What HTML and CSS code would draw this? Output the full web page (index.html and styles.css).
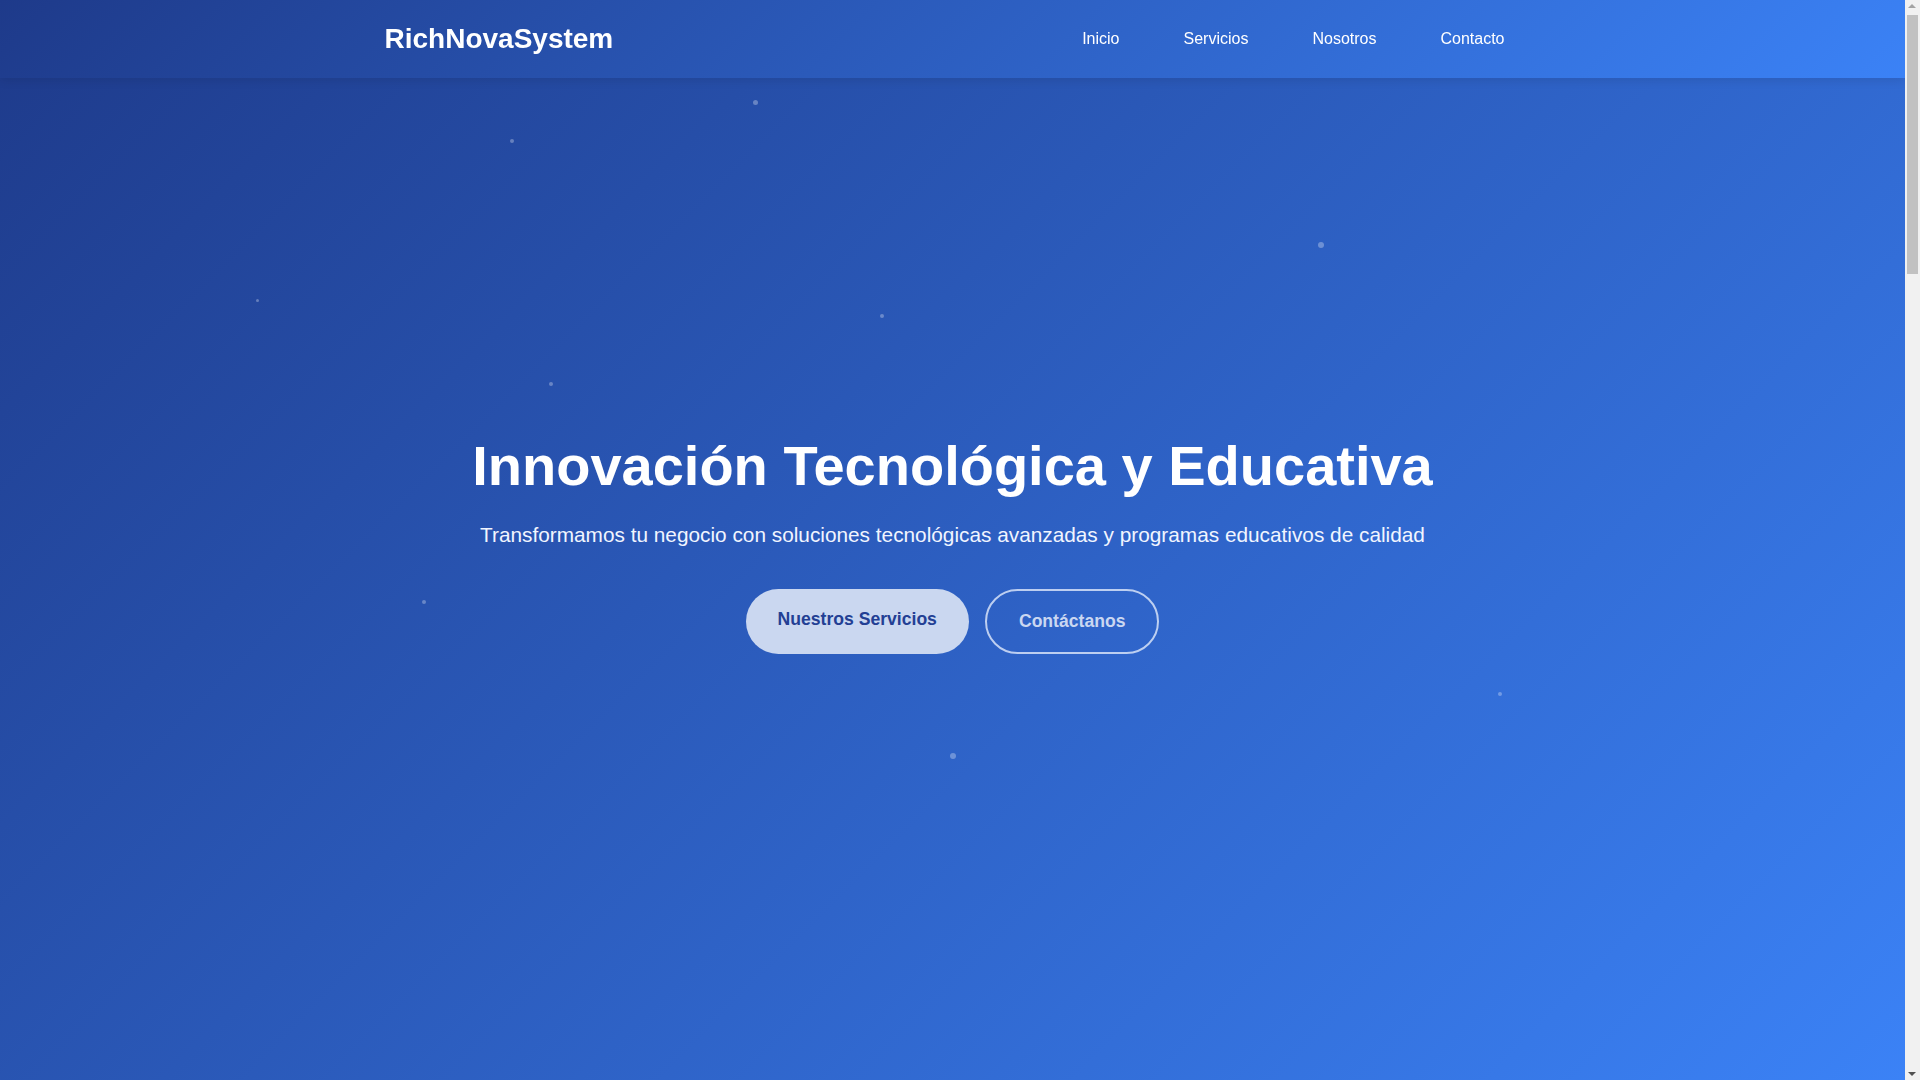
FILE: index.html
```html
<!DOCTYPE html>
<html lang="es">
<head>
<meta charset="UTF-8">
<title>RichNovaSystem</title>
<link rel="stylesheet" href="styles.css">
</head>
<body>
<header class="site-header">
  <div class="container header-inner">
    <a class="logo" href="#">RichNovaSystem</a>
    <nav>
      <ul class="nav-list">
        <li><a href="#inicio">Inicio</a></li>
        <li><a href="#servicios">Servicios</a></li>
        <li><a href="#nosotros">Nosotros</a></li>
        <li><a href="#contacto">Contacto</a></li>
      </ul>
    </nav>
  </div>
</header>

<div class="fake-scrollbar" aria-hidden="true">
  <span class="sb-arrow sb-up"></span>
  <span class="sb-thumb"></span>
  <span class="sb-arrow sb-down"></span>
</div>

<main class="page">
<section class="hero" id="inicio">
  <div class="particles">
    <span class="dot d1"></span>
    <span class="dot d2"></span>
    <span class="dot d3"></span>
    <span class="dot d4"></span>
    <span class="dot d5"></span>
    <span class="dot d6"></span>
    <span class="dot d7"></span>
    <span class="dot d8"></span>
    <span class="dot d9"></span>
  </div>
  <div class="hero-content">
    <h1 class="hero-title">Innovación Tecnológica y Educativa</h1>
    <p class="hero-subtitle">Transformamos tu negocio con soluciones tecnológicas avanzadas y programas educativos de calidad</p>
    <div class="hero-buttons">
      <a class="btn btn-primary" href="#servicios">Nuestros Servicios</a>
      <a class="btn btn-outline" href="#contacto">Contáctanos</a>
    </div>
  </div>
</section>

<section class="section" id="servicios">
  <div class="container">
    <h2 class="section-title">Nuestros Servicios</h2>
    <div class="cards">
      <div class="card"><h3>Desarrollo de Software</h3><p>Soluciones a medida para tu empresa.</p></div>
      <div class="card"><h3>Consultoría Tecnológica</h3><p>Asesoría experta para tu transformación digital.</p></div>
      <div class="card"><h3>Programas Educativos</h3><p>Formación de calidad en tecnología.</p></div>
    </div>
  </div>
</section>

<section class="section section-alt" id="nosotros">
  <div class="container">
    <h2 class="section-title">Nosotros</h2>
    <p class="section-text">Somos un equipo comprometido con la innovación tecnológica y educativa.</p>
  </div>
</section>

<section class="section" id="contacto">
  <div class="container">
    <h2 class="section-title">Contacto</h2>
    <p class="section-text">Escríbenos y te responderemos a la brevedad.</p>
  </div>
</section>

<footer class="site-footer">
  <div class="container">© RichNovaSystem</div>
</footer>
</main>
</body>
</html>
```

FILE: styles.css
```css
* {
  box-sizing: border-box;
  margin: 0;
  padding: 0;
}

html, body {
  font-family: "Liberation Sans", Arial, sans-serif;
  color: #1f2937;
  background: #ffffff;
}

body {
  padding-right: 15px;
}

a {
  text-decoration: none;
}

.container {
  max-width: 1200px;
  margin: 0 auto;
  padding: 0 2rem;
}

.site-header {
  position: fixed;
  top: 0;
  left: 0;
  right: 15px;
  z-index: 10;
  background: linear-gradient(135deg, #1e3a8a 0%, #3b82f6 100%);
  box-shadow: 0 2px 10px rgba(0, 0, 0, 0.1);
}

.header-inner {
  height: 78px;
  display: flex;
  align-items: center;
  justify-content: space-between;
}

.logo {
  color: #ffffff;
  font-size: 28px;
  font-weight: 700;
}

.nav-list {
  list-style: none;
  display: flex;
  gap: 2rem;
}

.nav-list a {
  display: block;
  color: #ffffff;
  font-size: 16px;
  padding: 0.5rem 1rem;
}

/* emulated browser scrollbar */
.fake-scrollbar {
  position: fixed;
  top: 0;
  right: 0;
  width: 15px;
  height: 100vh;
  background: #f1f1f1;
  z-index: 20;
}

.sb-thumb {
  position: absolute;
  left: 2px;
  right: 2px;
  top: 15px;
  height: 259px;
  background: #c1c1c1;
}

.sb-arrow {
  position: absolute;
  left: 3px;
  width: 0;
  height: 0;
  border-left: 4.5px solid transparent;
  border-right: 4.5px solid transparent;
}

.sb-up {
  top: 4px;
  border-bottom: 4.5px solid #a3a3a3;
}

.sb-down {
  bottom: 4px;
  border-top: 4.5px solid #505050;
}

.hero {
  position: relative;
  min-height: 100vh;
  padding-top: 6px;
  display: flex;
  align-items: center;
  justify-content: center;
  text-align: center;
  color: #ffffff;
  background: linear-gradient(135deg, #1e3a8a 0%, #3b82f6 100%);
  overflow: hidden;
}

.particles {
  position: absolute;
  inset: 0;
  pointer-events: none;
}

.dot {
  position: absolute;
  border-radius: 50%;
  background: rgba(255, 255, 255, 0.3);
  width: 5px;
  height: 5px;
}

.d1 { left: 753px; top: 100px; }
.d2 { left: 510px; top: 139px; width: 4px; height: 4px; }
.d3 { left: 1318px; top: 242px; width: 6px; height: 6px; }
.d4 { left: 256px; top: 299px; width: 3px; height: 3px; }
.d5 { left: 880px; top: 314px; width: 4px; height: 4px; }
.d6 { left: 549px; top: 382px; width: 4px; height: 4px; }
.d7 { left: 422px; top: 600px; width: 4px; height: 4px; }
.d8 { left: 1498px; top: 692px; width: 4px; height: 4px; }
.d9 { left: 950px; top: 753px; width: 6px; height: 6px; }

.hero-content {
  position: relative;
  z-index: 1;
  max-width: 1100px;
  padding: 0 2rem;
}

.hero-title {
  font-size: 56px;
  font-weight: 700;
  line-height: 1.2;
  margin-bottom: 18.5px;
}

.hero-subtitle {
  font-size: 20.8px;
  line-height: 1.6;
  margin-bottom: 37.5px;
  color: #f1f5ff;
}

.hero-buttons {
  display: flex;
  justify-content: center;
  gap: 1rem;
}

.btn {
  display: inline-block;
  font-size: 17.6px;
  font-weight: 700;
  padding: 1.25rem 2rem;
  border-radius: 50px;
}

.btn-primary {
  background: #cad7f0;
  color: #233f94;
}

.btn-outline {
  border: 2px solid rgba(214, 226, 248, 0.85);
  color: #cad7f1;
}

.section {
  min-height: 900px;
  padding: 6rem 0;
  background: #ffffff;
}

.section-alt {
  background: #f3f6fc;
}

.section-title {
  font-size: 40px;
  text-align: center;
  color: #1e3a8a;
  margin-bottom: 3rem;
}

.section-text {
  text-align: center;
  font-size: 18px;
  color: #4b5563;
}

.cards {
  display: grid;
  grid-template-columns: repeat(3, 1fr);
  gap: 2rem;
}

.card {
  padding: 2rem;
  border-radius: 12px;
  background: #f8faff;
  box-shadow: 0 4px 16px rgba(30, 58, 138, 0.08);
}

.card h3 {
  color: #1e3a8a;
  margin-bottom: 1rem;
}

.site-footer {
  min-height: 600px;
  padding: 3rem 0;
  background: #1e3a8a;
  color: #ffffff;
  text-align: center;
}
```
